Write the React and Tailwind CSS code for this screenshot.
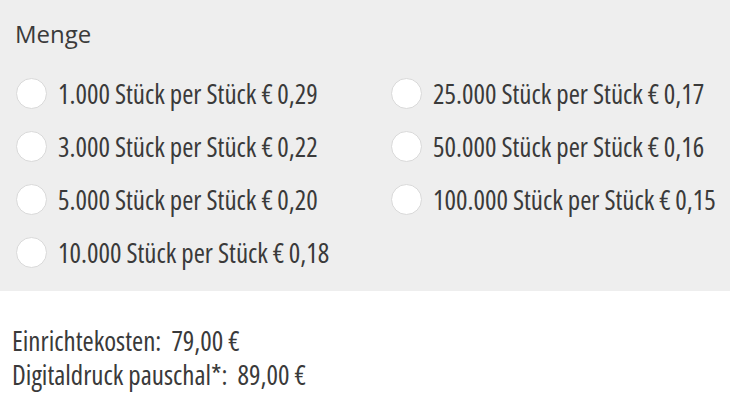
const options = [
  ['1.000', '0,29'], ['25.000', '0,17'],
  ['3.000', '0,22'], ['50.000', '0,16'],
  ['5.000', '0,20'], ['100.000', '0,15'],
  ['10.000', '0,18'],
]

function Radio({ qty, price }) {
  return (
    <label className="flex items-center h-[53px] cursor-pointer">
      <span className="w-[31px] h-[31px] rounded-full bg-white border border-[#d9d9d9] shrink-0" />
      <span className="ml-[11px] text-[27px] leading-none font-stretch-condensed text-[#3a3a3a] whitespace-nowrap">
        {qty} Stück per Stück €&thinsp;{price}
      </span>
    </label>
  )
}

export default function App() {
  return (
    <div className="w-[730px] h-[417px] bg-white font-['Open_Sans',sans-serif]">
      <div className="bg-[#eeeeee] h-[291px] pt-[22px] pl-4 pr-1">
        <h3 className="text-[24px] leading-none font-normal text-[#3a3a3a] -ml-px">Menge</h3>
        <div className="grid grid-cols-[375px_1fr] mt-[21px]">
          {options.map(([q, p]) => <Radio key={q} qty={q} price={p} />)}
        </div>
      </div>

      <div className="pl-3 pt-[33px] text-[27px] leading-[34px] font-stretch-condensed text-[#3a3a3a]">
        <p>Einrichtekosten:&nbsp; 79,00 €</p>
        <p>Digitaldruck pauschal*:&nbsp; 89,00 €</p>
      </div>
    </div>
  )
}
